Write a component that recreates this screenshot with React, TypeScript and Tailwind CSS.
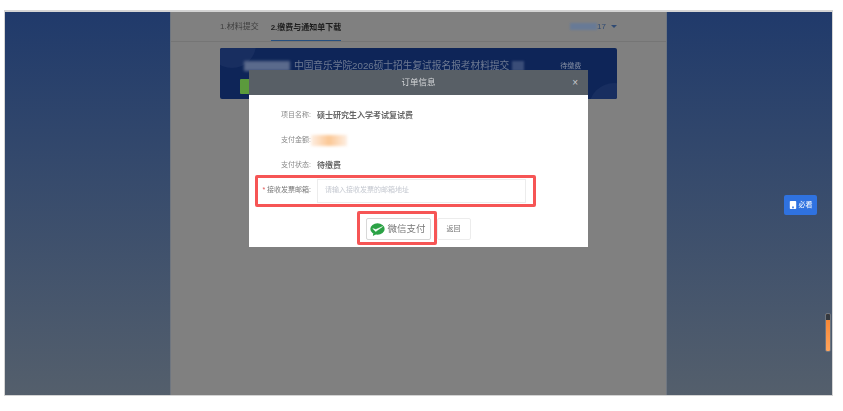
const font = { fontFamily: '"Liberation Sans", "Noto Sans CJK SC", sans-serif' };

const Row = ({ label, children }: { label: string; children: React.ReactNode }) => (
  <div className="flex items-center h-[25px]">
    <span className="w-[62px] text-right text-[7px] text-[#8a8a8a] blur-[0.4px] shrink-0 whitespace-nowrap">{label}</span>
    <div className="ml-[6px] text-[8px] font-bold text-[#666] blur-[0.3px]">{children}</div>
  </div>
);

export default function App() {
  return (
    <div style={font} className="relative w-[843px] h-[411px] bg-white overflow-hidden">
      <div className="h-[10px]" />
      <div className="ml-[4px] w-[829px] h-[386px] border-t-2 border-x border-b border-[#d4d4d4] flex">
        <div className="w-[165px] h-full bg-gradient-to-b from-[#203a6b] to-[#545f6c]" />

        <div className="w-[497px] h-full bg-[#808080] border-x border-[#6f7680]">
          <div className="h-[30px] flex items-center border-b border-[#757575] pl-[49px] pr-[49px]">
            <span className="text-[8px] text-[#3f3f3f] blur-[0.3px]">1.材料提交</span>
            <span className="ml-[12px] h-[25px] mt-[3px] flex items-center border-b border-[#27507f] text-[8px] font-bold text-[#1c1c1c] blur-[0.2px]">2.缴费与通知单下载</span>
            <div className="ml-auto flex items-center gap-[5px]">
              <div className="flex items-center text-[8px] text-[#2f4a73] blur-[0.2px]">
                <div className="w-[27px] h-[7px] bg-[#687a96] blur-[1px]" />
                <span>17</span>
              </div>
              <div className="w-0 h-0 border-x-[3px] border-x-transparent border-t-[3px] border-t-[#2f4a73]" />
            </div>
          </div>
          <div className="relative mt-[6px] mx-[49px] h-[51px] rounded-[2px] bg-[#0e2558] overflow-hidden">
            <div className="absolute -left-[12px] -top-[28px] w-[48px] h-[48px] rounded-full bg-[#182e60]" />
            <div className="absolute right-[-22px] bottom-[-34px] w-[50px] h-[50px] rounded-full bg-[#182e60]" />
            <div className="relative flex items-center h-[30px] pl-[24px] pt-[6px]">
              <div className="w-[46px] h-[10px] bg-[#5a6a8c] blur-[1.5px]" />
              <span className="ml-[4px] text-[9.7px] text-[#6e7a92] blur-[0.3px] whitespace-nowrap">中国音乐学院2026硕士招生复试报名报考材料提交</span>
              <div className="ml-[3px] w-[12px] h-[10px] bg-[#3a4d78] blur-[1px]" />
              <span className="ml-[36px] text-[7px] text-[#8a93a6] blur-[0.3px]">待缴费</span>
            </div>
            <div className="relative ml-[20px] mt-[1px] w-[10px] h-[15px] rounded-[1px] bg-[#5b9a3c]" />
          </div>
        </div>

        <div className="flex-1 h-full bg-gradient-to-b from-[#203a6b] to-[#545f6c]" />
      </div>

      {/* order dialog */}
      <div className="absolute left-[249px] top-[70px] w-[339px] h-[177px] bg-white">
        <div className="relative h-[25px] bg-[#585f66] flex items-center justify-center">
          <span className="text-[8.5px] text-[#d5d7d9] blur-[0.2px]">订单信息</span>
          <span className="absolute right-[10px] top-[6px] text-[10px] leading-[14px] text-[#c8cacc]">×</span>
        </div>
        <div className="pt-[8px]">
          <Row label="项目名称:">硕士研究生入学考试复试费</Row>
          <Row label="支付金额:">
            <div className="-ml-[6px] w-[36px] h-[11px] bg-gradient-to-r from-[#fdeee2] via-[#fbc794] to-[#fdeee2] blur-[1.5px]" />
          </Row>
          <Row label="支付状态:">待缴费</Row>
          <div className="flex items-center h-[25px]">
            <span className="w-[62px] text-right text-[7px] text-[#777] blur-[0.4px] shrink-0 whitespace-nowrap"><span className="text-[#e05050]">* </span>接收发票邮箱:</span>
            <div className="ml-[6px] w-[209px] h-[24px] border border-[#ececec] flex items-center pl-[7px] text-[7px] text-[#c4c8d0] blur-[0.4px]">请输入接收发票的邮箱地址</div>
          </div>
          <div className="mt-[15px] flex justify-center gap-[6px] pr-[1px]">
            <button className="h-[22px] w-[65px] border border-[#d8d8d8] rounded-[2px] flex items-center justify-center gap-[2px] text-[9.5px] text-[#777]">
              <svg viewBox="0 0 16 14" className="w-[15px] h-[13px]">
                <ellipse cx="8" cy="6.5" rx="7.7" ry="6.2" fill="#2ba245" />
                <path d="M3.5 11 L3 14 L6.5 12 Z" fill="#2ba245" />
                <path d="M3 6 L6 9.2 L13.5 3.8 L6.2 7 Z" fill="#fff" stroke="#fff" strokeWidth="0.5" />
              </svg>
              <span className="blur-[0.2px]">微信支付</span>
            </button>
            <button className="h-[22px] w-[34px] border border-[#ececec] rounded-[2px] text-[7px] text-[#777] blur-[0.3px]">返回</button>
          </div>
        </div>
      </div>

      {/* red annotation boxes */}
      <div className="absolute left-[255px] top-[175px] w-[281px] h-[32px] border-[3px] border-[#f65555] rounded-[2px]" />
      <div className="absolute left-[357px] top-[211px] w-[80px] h-[34px] border-[3px] border-[#f65555] rounded-[2px]" />

      {/* floating side button and scroll slider */}
      <div className="absolute left-[784px] top-[195px] w-[33px] h-[20px] rounded-[2px] bg-[#2f72e0] flex items-center justify-center gap-[2px] text-[7px] text-white">
        <svg viewBox="0 0 10 10" className="w-[8px] h-[8px]"><path d="M1 1q0-1 1-1h6q1 0 1 1v8q0 1-1 1H2q-1 0-1-1z" fill="#fff" /><path d="M4 7h2v2H4z" fill="#2f72e0" /></svg>
        <span className="blur-[0.3px]">必看</span>
      </div>
      <div className="absolute left-[825px] top-[313px] w-[6px] h-[39px] rounded-[2px] border border-[#6f7680] bg-gradient-to-b from-[#f5812a] to-[#ffa45c] overflow-hidden">
        <div className="h-[6px] bg-[#33383f]" />
      </div>
    </div>
  );
}
